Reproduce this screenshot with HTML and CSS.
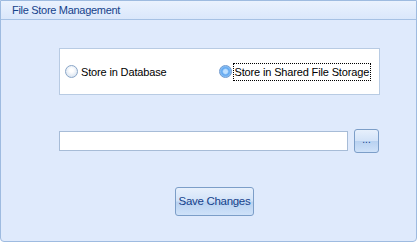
FILE: index.html
```html
<!DOCTYPE html>
<html lang="en">
<head>
    <meta charset="UTF-8">
    <title>File Store Management</title>
    <link rel="stylesheet" href="styles.css">
</head>
<body>
    <div class="panel">
        <div class="panel-header">File Store Management</div>
        <div class="panel-body">
            <div class="option-box">
                <label class="option">
                    <span class="radio"></span>
                    <span class="option-text">Store in Database</span>
                </label>
                <label class="option option-shared">
                    <span class="radio checked"></span>
                    <span class="option-text focused">Store in Shared File Storage</span>
                </label>
            </div>
            <div class="path-row">
                <div class="path-input"></div>
                <div class="browse-btn">...</div>
            </div>
            <div class="save-row">
                <div class="save-btn">Save Changes</div>
            </div>
        </div>
    </div>
</body>
</html>
```

FILE: styles.css
```css
body {
    margin: 0;
    font-family: 'Liberation Sans', Arial, sans-serif;
    font-size: 11px;
    color: #000;
    background: #ffffff;
    white-space: nowrap;
}
.panel {
    width: 417px;
    height: 242px;
    box-sizing: border-box;
    border: 1px solid #9ebbe0;
    border-radius: 0 0 4px 4px;
    background: #dfeafc;
    overflow: hidden;
}
.panel-header {
    height: 18px;
    line-height: 18px;
    padding-left: 11px;
    color: #15428b;
    font-size: 11px;
    letter-spacing: -0.3px;
    background: linear-gradient(#eaf2fe, #dae7fb);
    border-bottom: 1px solid #a6c1e4;
}
.panel-body {
    padding-left: 58px;
}
.option-box {
    margin-top: 28px;
    width: 321px;
    height: 47px;
    box-sizing: border-box;
    border: 1px solid #b8cbe3;
    background: #fff;
    display: flex;
    align-items: center;
    padding-left: 5px;
    letter-spacing: -0.15px;
}
.option {
    display: flex;
    align-items: center;
    gap: 2px;
}
.option-shared {
    margin-left: 51px;
}
.radio {
    width: 11px;
    height: 11px;
    flex: none;
    border-radius: 50%;
    border: 1px solid #8aa6c8;
    background: radial-gradient(circle at 50% 40%, #ffffff 20%, #dfe8f3 70%, #c4d3e4);
}
.radio.checked {
    border-color: #6f9ad0;
    background: radial-gradient(circle at 50% 50%, #bfe0ff 0 25%, #5fa6f0 45%, #8ec3f5 70%, #d8e9fb);
}
.option-text {
    padding: 2px 1px;
}
.focused {
    outline: 1px dotted #000;
    outline-offset: 0;
}
.path-row {
    margin-top: 34px;
    display: flex;
    align-items: center;
    width: 320px;
}
.path-input {
    width: 289px;
    height: 20px;
    box-sizing: border-box;
    border: 1px solid #a7bcd7;
    background: #fff;
}
.browse-btn {
    margin-left: 6px;
    width: 25px;
    height: 24px;
    box-sizing: border-box;
    border: 1px solid #7c9ec8;
    border-radius: 3px;
    background: linear-gradient(#e7f0fc 0, #d3e3f8 48%, #b9d2f1 52%, #cfe2f9 100%);
    color: #15428b;
    text-align: center;
    line-height: 20px;
    font-size: 10px;
}
.save-row {
    margin-top: 34px;
    padding-left: 116px;
}
.save-btn {
    width: 79px;
    height: 29px;
    box-sizing: border-box;
    border: 1px solid #7c9ec8;
    border-radius: 3px;
    background: linear-gradient(#e7f0fc 0, #d3e3f8 48%, #b9d2f1 52%, #cfe2f9 100%);
    color: #15428b;
    font-size: 11.5px;
    letter-spacing: -0.3px;
    text-align: center;
    line-height: 27px;
}
```
